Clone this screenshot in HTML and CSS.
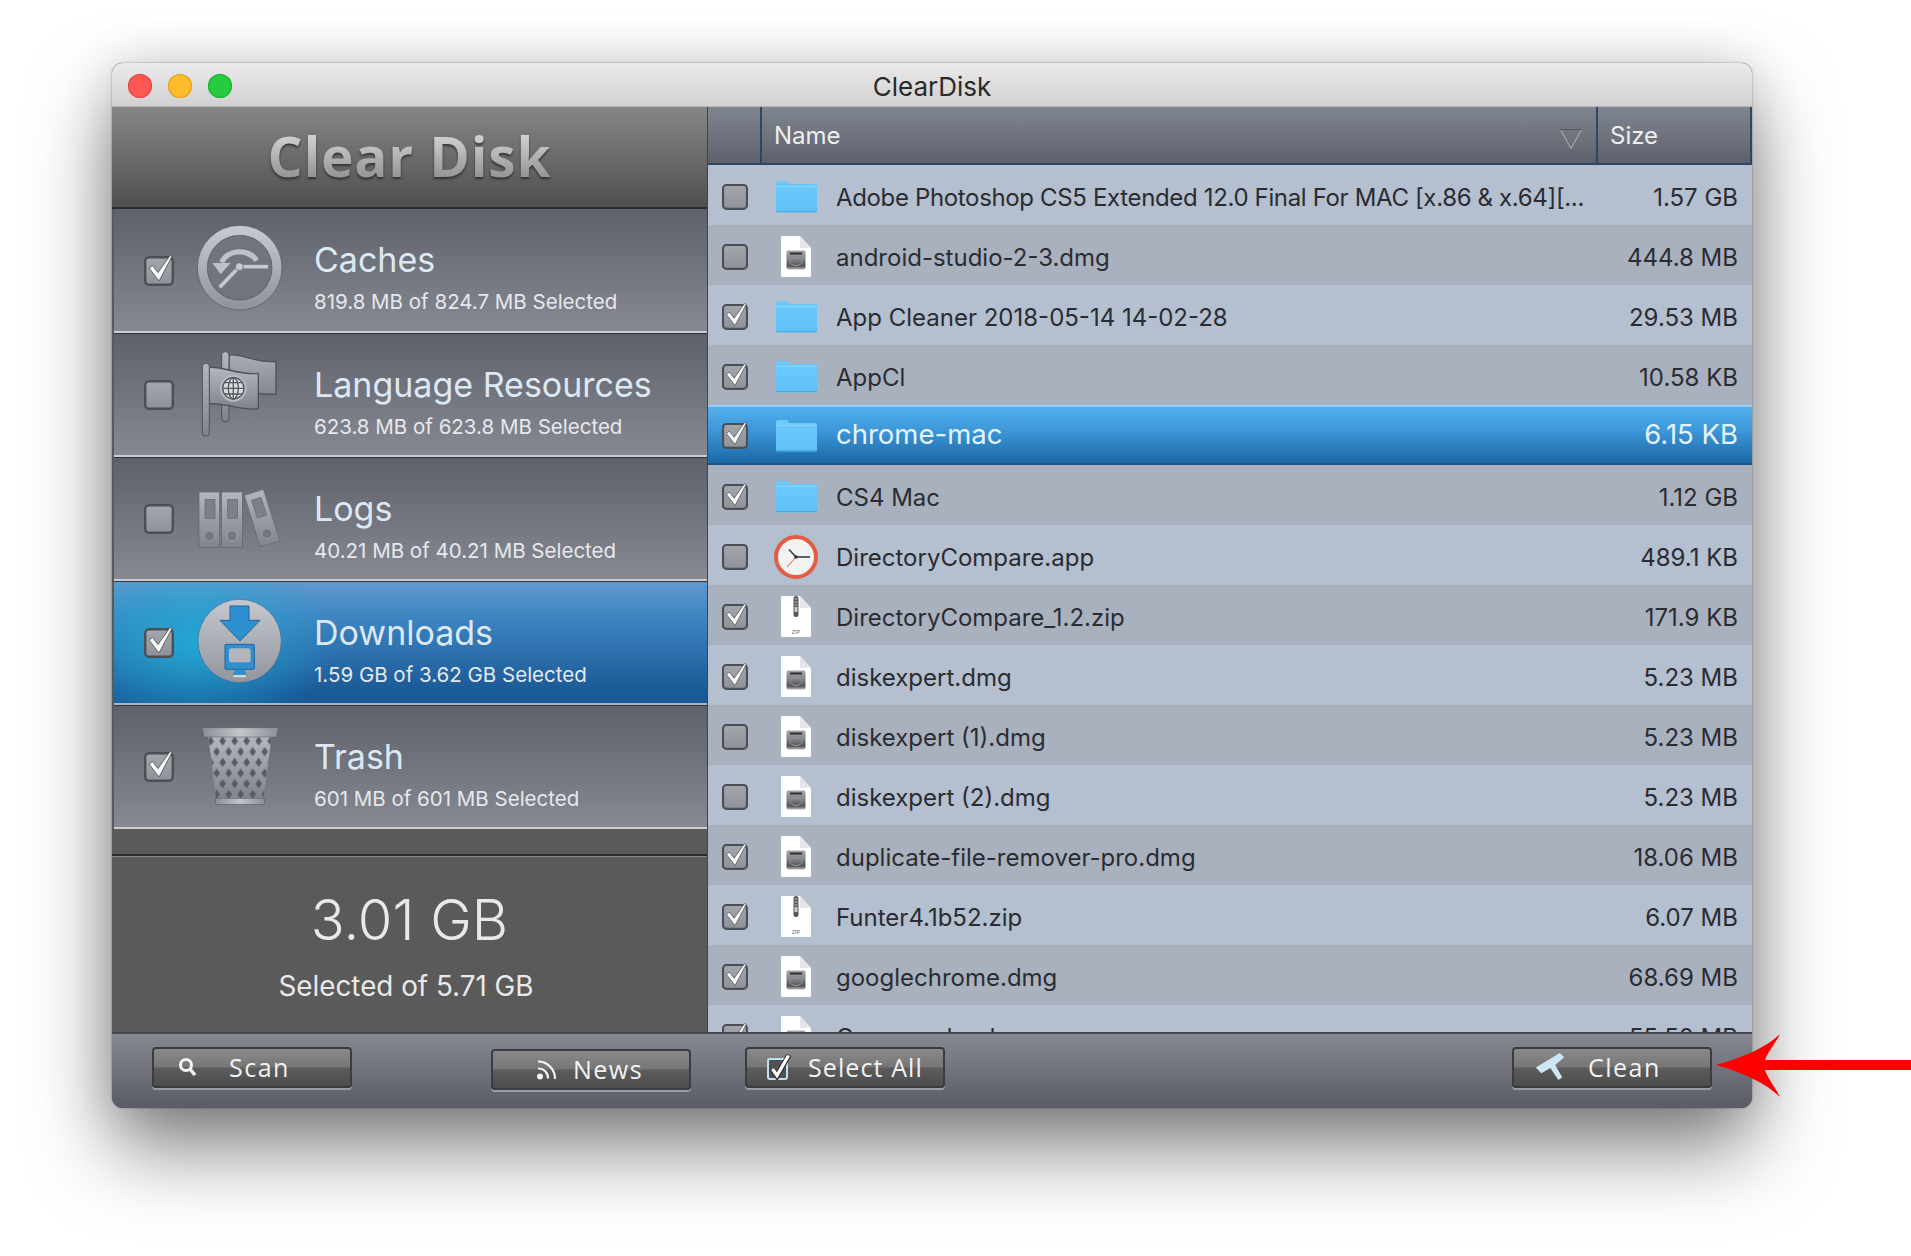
FILE: index.html
```html
<!DOCTYPE html>
<html lang="en">
<head>
<meta charset="utf-8">
<title>ClearDisk</title>
<link rel="stylesheet" href="styles.css">
</head>
<body>
<svg class="defs" aria-hidden="true">
  <defs>
    <linearGradient id="g-metal" x1="0" y1="0" x2="0" y2="1"><stop offset="0" stop-color="#b4b7be"/><stop offset="1" stop-color="#7f838c"/></linearGradient>
    <linearGradient id="g-flat" x1="0" y1="0" x2="0" y2="1"><stop offset="0" stop-color="#a9acb3"/><stop offset="1" stop-color="#83878f"/></linearGradient>
    <linearGradient id="g-disc" x1="0" y1="0" x2="0" y2="1"><stop offset="0" stop-color="#c6c8ce"/><stop offset="1" stop-color="#92959d"/></linearGradient>
    <linearGradient id="g-rim" x1="0" y1="0" x2="1" y2="0"><stop offset="0" stop-color="#8b8e95"/><stop offset=".5" stop-color="#c2c5ca"/><stop offset="1" stop-color="#8b8e95"/></linearGradient>
    <linearGradient id="g-box" x1="0" y1="0" x2="0" y2="1"><stop offset="0" stop-color="#a4a7ad"/><stop offset="1" stop-color="#8e9198"/></linearGradient>
    <linearGradient id="g-folder" x1="0" y1="0" x2="0" y2="1"><stop offset="0" stop-color="#6ccbfc"/><stop offset="1" stop-color="#5fc1f8"/></linearGradient>
    <linearGradient id="g-disk" x1="0" y1="0" x2="0" y2="1"><stop offset="0" stop-color="#a3a5a9"/><stop offset=".45" stop-color="#828488"/><stop offset=".82" stop-color="#515356"/><stop offset="1" stop-color="#b8b9bb"/></linearGradient>
    <pattern id="p-mesh" width="72" height="64" patternUnits="userSpaceOnUse" x="74" y="432">
      <path d="M18 4l10 14-10 14-10-14zM54 4l10 14-10 14-10-14zM0 36l10 14L0 64-10 50zM36 36l10 14-10 14-10-14zM72 36l10 14-10 14-10-14z" fill="#585b62"/>
    </pattern>

    <symbol id="cb-on" viewBox="0 0 30 31">
      <rect x="1.200" y="2.200" width="27.600" height="27.600" rx="4" fill="url(#g-box)" stroke="#4b4e55" stroke-width="2.400"/>
      <path d="M5 13L8.500 10.500 14 17.500 26 .5 28 1.500 15 26Z" fill="#f8f8f8" stroke="#55585e" stroke-width=".9"/>
    </symbol>
    <symbol id="cb-off" viewBox="0 0 30 31">
      <rect x="1.200" y="2.200" width="27.600" height="27.600" rx="4" fill="url(#g-box)" stroke="#4b4e55" stroke-width="2.400"/>
    </symbol>

    <symbol id="i-folder" viewBox="0 0 41 33">
      <path d="M0 3.500Q0 1 2 1h9l2.500 3H39q2 0 2 2v25q0 1.500-1.500 1.500h-38Q0 32.500 0 31z" fill="url(#g-folder)"/>
      <path d="M0 31.500h41" stroke="#4aa8e2" stroke-width="1"/>
      <path d="M0 6.500h41" stroke="#8ad6fd" stroke-width="1"/>
    </symbol>
    <symbol id="i-dmg" viewBox="0 0 30 41">
      <path d="M0 0h19l11 12v29H0z" fill="#fff"/>
      <path d="M19 0v12h11z" fill="#e5e6e8"/>
      <rect x="5.500" y="14.500" width="19" height="19" rx="2" fill="url(#g-disk)"/>
      <rect x="9" y="16.500" width="12" height="2" fill="#2f3033"/>
      <ellipse cx="15" cy="25.500" rx="6" ry="4" fill="none" stroke="#95979a" stroke-width="1"/>
    </symbol>
    <symbol id="i-zip" viewBox="0 0 30 41">
      <path d="M0 0h19l11 12v29H0z" fill="#fff"/>
      <path d="M19 0v12h11z" fill="#e5e6e8"/>
      <rect x="12.500" y="0" width="5" height="21" rx="2.500" fill="#55585e"/>
      <path d="M13.500 3h3M13.500 6h3M13.500 9h3" stroke="#bfc1c4" stroke-width="1"/>
      <rect x="13.500" y="11" width="3" height="5" fill="#c9cbce"/>
      <text x="15" y="38" font-family="Liberation Sans, sans-serif" font-size="5.500" fill="#6a6c70" text-anchor="middle">ZIP</text>
    </symbol>
    <symbol id="i-clock" viewBox="0 0 44 44">
      <circle cx="22" cy="22" r="20" fill="#f2f2f1" stroke="#e55c46" stroke-width="4"/>
      <path d="M22 22L15 14.500" stroke="#3c4350" stroke-width="1.800"/>
      <path d="M22 22h14" stroke="#4a5260" stroke-width="1.800"/>
      <path d="M22 22L13 32" stroke="#e55c46" stroke-width="1"/>
      <circle cx="22" cy="22" r="1.800" fill="#2c3340"/>
    </symbol>
  </defs>
</svg>

<main class="window">
  <header class="titlebar">
    <div class="lights"><i class="light light-red"></i><i class="light light-yellow"></i><i class="light light-green"></i></div>
    <span class="window-title">ClearDisk</span>
  </header>

  <div class="main">
    <aside class="sidebar">
      <div class="brand"><span class="brand-text">Clear Disk</span></div>

      <section class="cat">
        <svg class="cat-check"><use href="#cb-on"/></svg>
        <svg class="cat-icon" viewBox="0 -27 360 360">
          <circle cx="179" cy="146" r="113" fill="#71747c"/>
          <circle cx="179" cy="146" r="112" fill="none" stroke="url(#g-disc)" stroke-width="29"/>
          <circle cx="179" cy="146" r="127" fill="none" stroke="#55585f" stroke-width="2"/>
          <circle cx="179" cy="146" r="97" fill="none" stroke="#55585f" stroke-width="2"/>
          <path d="M125 130a56 44 0 0 1 105 -5" fill="none" stroke="#bec1c6" stroke-width="16"/>
          <path d="M97 132h55l-30 34z" fill="#bec1c6"/>
          <path d="M178 143h86" stroke="#c6c8cd" stroke-width="11"/>
          <path d="M178 143l-59 62" stroke="#c6c8cd" stroke-width="11"/>
          <circle cx="178" cy="143" r="12" fill="#c8cacf" stroke="#55585f" stroke-width="2"/>
        </svg>
        <div class="cat-text">
          <h2 class="cat-title">Caches</h2>
          <p class="cat-sub">819.8 MB of 824.7 MB Selected</p>
        </div>
      </section>

      <section class="cat">
        <svg class="cat-check"><use href="#cb-off"/></svg>
        <svg class="cat-icon" viewBox="0 -15 360 360">
          <path d="M147 45C190 40 230 72 288 64V162C240 170 200 146 147 152Z" fill="url(#g-flat)" stroke="#4e5158" stroke-width="4"/>
          <rect x="125" y="35" width="22" height="210" rx="10" fill="url(#g-metal)" stroke="#4e5158" stroke-width="3"/>
          <path d="M87 82C130 78 180 108 235 100V206C190 214 130 186 87 192Z" fill="url(#g-metal)" stroke="#4e5158" stroke-width="4"/>
          <rect x="67" y="70" width="21" height="218" rx="9" fill="url(#g-metal)" stroke="#4e5158" stroke-width="3"/>
          <circle cx="160" cy="145" r="40" fill="#b8bbc1"/>
          <circle cx="160" cy="145" r="32" fill="#dcdde0" stroke="#55585f" stroke-width="4"/>
          <path d="M128 145h64M133 128h54M133 162h54M160 113v64" stroke="#55585f" stroke-width="4" fill="none"/>
          <ellipse cx="160" cy="145" rx="15" ry="32" fill="none" stroke="#55585f" stroke-width="4"/>
        </svg>
        <div class="cat-text">
          <h2 class="cat-title">Language Resources</h2>
          <p class="cat-sub">623.8 MB of 623.8 MB Selected</p>
        </div>
      </section>

      <section class="cat">
        <svg class="cat-check"><use href="#cb-off"/></svg>
        <svg class="cat-icon" viewBox="0 354 360 360">
          <rect x="57" y="453" width="62" height="167" fill="url(#g-metal)" stroke="#61646b" stroke-width="2"/>
          <rect x="75" y="475" width="30" height="57" fill="#7d8088" stroke="#63666d" stroke-width="2"/>
          <circle cx="88" cy="585" r="15" fill="#74777f" stroke="#a9acb2" stroke-width="2"/>
          <rect x="125" y="453" width="62" height="167" fill="url(#g-metal)" stroke="#61646b" stroke-width="2"/>
          <rect x="143" y="475" width="30" height="57" fill="#7d8088" stroke="#63666d" stroke-width="2"/>
          <circle cx="156" cy="585" r="15" fill="#74777f" stroke="#a9acb2" stroke-width="2"/>
          <path d="M193 463L250 445 300 600 240 617Z" fill="url(#g-metal)" stroke="#61646b" stroke-width="2"/>
          <path d="M214 478L243 469 260 522 232 531Z" fill="#7d8088" stroke="#63666d" stroke-width="2"/>
          <circle cx="261" cy="578" r="15" fill="#74777f" stroke="#a9acb2" stroke-width="2"/>
        </svg>
        <div class="cat-text">
          <h2 class="cat-title">Logs</h2>
          <p class="cat-sub">40.21 MB of 40.21 MB Selected</p>
        </div>
      </section>

      <section class="cat cat-active">
        <svg class="cat-check"><use href="#cb-on"/></svg>
        <svg class="cat-icon" viewBox="0 -24 360 360">
          <circle cx="179" cy="150" r="125" fill="url(#g-disc)" stroke="#2f6ba3" stroke-width="2"/>
          <path d="M150 45h57v43h33l-60 62-60-62h30z" fill="#2f90cf" stroke="#1e659e" stroke-width="3"/>
          <rect x="135" y="160" width="88" height="75" rx="3" fill="#2f90cf" stroke="#1e659e" stroke-width="3"/>
          <rect x="147" y="172" width="65" height="42" rx="8" fill="#b3b6bc"/>
          <path d="M165 237h28l7 14h-42z" fill="#2f90cf"/>
          <rect x="160" y="252" width="38" height="7" rx="2" fill="#d5d7da"/>
        </svg>
        <div class="cat-text">
          <h2 class="cat-title">Downloads</h2>
          <p class="cat-sub">1.59 GB of 3.62 GB Selected</p>
        </div>
      </section>

      <section class="cat">
        <svg class="cat-check"><use href="#cb-on"/></svg>
        <svg class="cat-icon" viewBox="0 348 360 360">
          <path d="M85 436H275L250 624H108Z" fill="url(#g-metal)"/>
          <path d="M85 436H275L250 624H108Z" fill="url(#p-mesh)"/>
          <path d="M66 410H295L290 438H72Z" fill="url(#g-rim)" stroke="#55585f" stroke-width="1.500"/>
          <rect x="107" y="622" width="146" height="18" fill="url(#g-rim)" stroke="#55585f" stroke-width="1.500"/>
        </svg>
        <div class="cat-text">
          <h2 class="cat-title">Trash</h2>
          <p class="cat-sub">601 MB of 601 MB Selected</p>
        </div>
      </section>

      <div class="spacer"></div>

      <div class="stats">
        <div class="stats-size">3.01 GB</div>
        <div class="stats-note">Selected of 5.71 GB</div>
      </div>
    </aside>

    <section class="files">
      <div class="thead">
        <div class="th th-check"></div>
        <div class="th th-name">Name
          <svg class="sort" viewBox="0 0 22 20"><path d="M.5.5h21L11 19.500z" fill="none" stroke="#b4b7bd"/><path d="M0 .5h22" stroke="#55585f"/></svg>
        </div>
        <div class="th th-size">Size</div>
      </div>
      <div class="tbody">
        <div class="row"><svg class="check"><use href="#cb-off"/></svg><span class="ficon"><svg class="ic-folder"><use href="#i-folder"/></svg></span><span class="fname fname-tight">Adobe Photoshop CS5 Extended 12.0 Final For MAC [x.86 &amp; x.64][...</span><span class="fsize">1.57 GB</span></div>
        <div class="row"><svg class="check"><use href="#cb-off"/></svg><span class="ficon"><svg class="ic-file"><use href="#i-dmg"/></svg></span><span class="fname">android-studio-2-3.dmg</span><span class="fsize">444.8 MB</span></div>
        <div class="row"><svg class="check"><use href="#cb-on"/></svg><span class="ficon"><svg class="ic-folder"><use href="#i-folder"/></svg></span><span class="fname">App Cleaner 2018-05-14 14-02-28</span><span class="fsize">29.53 MB</span></div>
        <div class="row"><svg class="check"><use href="#cb-on"/></svg><span class="ficon"><svg class="ic-folder"><use href="#i-folder"/></svg></span><span class="fname">AppCl</span><span class="fsize">10.58 KB</span></div>
        <div class="row row-selected"><svg class="check"><use href="#cb-on"/></svg><span class="ficon"><svg class="ic-folder"><use href="#i-folder"/></svg></span><span class="fname">chrome-mac</span><span class="fsize">6.15 KB</span></div>
        <div class="row"><svg class="check"><use href="#cb-on"/></svg><span class="ficon"><svg class="ic-folder"><use href="#i-folder"/></svg></span><span class="fname">CS4 Mac</span><span class="fsize">1.12 GB</span></div>
        <div class="row"><svg class="check"><use href="#cb-off"/></svg><span class="ficon"><svg class="ic-clock"><use href="#i-clock"/></svg></span><span class="fname">DirectoryCompare.app</span><span class="fsize">489.1 KB</span></div>
        <div class="row"><svg class="check"><use href="#cb-on"/></svg><span class="ficon"><svg class="ic-file"><use href="#i-zip"/></svg></span><span class="fname">DirectoryCompare_1.2.zip</span><span class="fsize">171.9 KB</span></div>
        <div class="row"><svg class="check"><use href="#cb-on"/></svg><span class="ficon"><svg class="ic-file"><use href="#i-dmg"/></svg></span><span class="fname">diskexpert.dmg</span><span class="fsize">5.23 MB</span></div>
        <div class="row"><svg class="check"><use href="#cb-off"/></svg><span class="ficon"><svg class="ic-file"><use href="#i-dmg"/></svg></span><span class="fname">diskexpert (1).dmg</span><span class="fsize">5.23 MB</span></div>
        <div class="row"><svg class="check"><use href="#cb-off"/></svg><span class="ficon"><svg class="ic-file"><use href="#i-dmg"/></svg></span><span class="fname">diskexpert (2).dmg</span><span class="fsize">5.23 MB</span></div>
        <div class="row"><svg class="check"><use href="#cb-on"/></svg><span class="ficon"><svg class="ic-file"><use href="#i-dmg"/></svg></span><span class="fname">duplicate-file-remover-pro.dmg</span><span class="fsize">18.06 MB</span></div>
        <div class="row"><svg class="check"><use href="#cb-on"/></svg><span class="ficon"><svg class="ic-file"><use href="#i-zip"/></svg></span><span class="fname">Funter4.1b52.zip</span><span class="fsize">6.07 MB</span></div>
        <div class="row"><svg class="check"><use href="#cb-on"/></svg><span class="ficon"><svg class="ic-file"><use href="#i-dmg"/></svg></span><span class="fname">googlechrome.dmg</span><span class="fsize">68.69 MB</span></div>
        <div class="row"><svg class="check"><use href="#cb-on"/></svg><span class="ficon"><svg class="ic-file"><use href="#i-dmg"/></svg></span><span class="fname">Commander.dmg</span><span class="fsize">55.50 MB</span></div>
      </div>
    </section>
  </div>

  <footer class="toolbar">
    <button class="btn btn-scan" type="button">
      <svg class="btn-ic ic-scan" viewBox="0 0 19 19"><circle cx="8" cy="8" r="5.500" fill="none" stroke="#f4f4f4" stroke-width="3"/><path d="M12 12l5 6" stroke="#f4f4f4" stroke-width="3.500"/></svg>
      <span>Scan</span>
    </button>
    <button class="btn btn-news" type="button">
      <svg class="btn-ic ic-news" viewBox="0 0 23 22"><circle cx="4" cy="18.500" r="3" fill="#f4f4f4"/><path d="M2 10.500a9.500 9.500 0 0 1 10 10M2 3.500a17 17 0 0 1 17 17.500" fill="none" stroke="#f4f4f4" stroke-width="2.200"/></svg>
      <span>News</span>
    </button>
    <button class="btn btn-select" type="button">
      <svg class="btn-ic ic-select" viewBox="0 0 26 26"><rect x="1" y="5" width="19" height="20" rx="2" fill="#4f5155" stroke="#bfe0ef" stroke-width="2"/><path d="M5 15l5 7L22 1" fill="none" stroke="#33353a" stroke-width="5.500"/><path d="M5.500 15l4.500 6.500L21.500 1.500" fill="none" stroke="#fff" stroke-width="3.200"/></svg>
      <span>Select All</span>
    </button>
    <button class="btn btn-clean" type="button">
      <svg class="btn-ic ic-clean" viewBox="256 222 92 90"><path d="M258 270L332 225 346 238 318 262 340 300 328 309 303 272 275 288Z" fill="#cde6f3"/></svg>
      <span>Clean</span>
    </button>
  </footer>
</main>

<svg class="annot-arrow" viewBox="0 0 195 64" aria-hidden="true">
  <path d="M0 31C25 24 50 14 64 0 59 10 51 19 49 26H195V36H49C51 43 59 53 64 63 50 49 25 38 0 31Z" fill="#fe0000"/>
</svg>
</body>
</html>
```

FILE: styles.css
```css
* { box-sizing: border-box; }

html, body {
  margin: 0;
  height: 100%;
  background: #fff;
  overflow: hidden;
}

body {
  position: relative;
  padding: 63px 0 0 112px;
  font-family: Inter, "Liberation Sans", sans-serif;
}

.defs { position: absolute; width: 0; height: 0; }

.window {
  width: 1640px;
  height: 1045px;
  display: grid;
  grid-template-rows: 44px 1fr 76px;
  border-radius: 11px;
  background: #5a5a5a;
  box-shadow: 0 40px 80px rgba(0, 0, 0, .5), 0 0 2px rgba(0, 0, 0, .45), 0 0 50px rgba(0, 0, 0, .12);
  overflow: hidden;
}

/* title bar */
.titlebar {
  position: relative;
  display: flex;
  align-items: center;
  justify-content: center;
  padding-top: 3px;
  background: linear-gradient(#ebe9ea, #d1d1d1);
  border-bottom: 1px solid #b5b5b5;
}

.lights {
  position: absolute;
  left: 16px;
  top: 11px;
  display: flex;
  gap: 16px;
}

.light { width: 24px; height: 24px; border-radius: 50%; display: block; }
.light-red { background: #fc5753; box-shadow: inset 0 0 0 1px #de4540; }
.light-yellow { background: #fdbc2c; box-shadow: inset 0 0 0 1px #de9f21; }
.light-green { background: #27cb3f; box-shadow: inset 0 0 0 1px #1fae2f; }

.window-title { font-size: 26px; color: #2a2a2a; }

.main {
  display: grid;
  grid-template-columns: 595px 1fr;
  min-height: 0;
}

/* sidebar */
.sidebar {
  display: flex;
  flex-direction: column;
  min-height: 0;
  background: #5a5a5a;
}

.brand {
  height: 102px;
  display: flex;
  align-items: center;
  justify-content: center;
  padding-bottom: 4px;
  background: linear-gradient(#868686, #4f4f4f);
  border-bottom: 2px solid #2b2c30;
}

.brand-text {
  font-family: "Open Sans", "Noto Sans", sans-serif;
  font-size: 55px;
  font-weight: 700;
  letter-spacing: .8px;
  line-height: 1;
  color: transparent;
  background: linear-gradient(#dcdcdc, #8c8c8c);
  -webkit-background-clip: text;
  background-clip: text;
  filter: drop-shadow(0 2px 1px rgba(30, 30, 30, .7));
}

.cat {
  height: 124px;
  margin-left: 2px;
  display: flex;
  align-items: center;
  padding-left: 30px;
  background: linear-gradient(#5e6169, #868991);
  border-bottom: 2px solid #cbcdd2;
  box-shadow: 0 1px 0 #2c2d31;
}

.cat + .cat { border-top: 1px solid #34363b; }

.cat-active {
  background:
    radial-gradient(ellipse 140px 90px at 80px 50%, rgba(32, 172, 214, .9), rgba(32, 172, 214, 0)),
    linear-gradient(#6099ce, #3f86c2 28%, #1a5a97 90%);
  border-bottom-color: #a4b6c8;
}

.cat-check { width: 30px; height: 31px; flex: none; }

.cat-icon {
  width: 120px;
  height: 120px;
  flex: none;
  margin: 0 14px 0 6px;
}

.cat-text { padding-top: 16px; min-width: 0; }

.cat-title {
  margin: 0 0 8px;
  font-size: 34px;
  font-weight: 400;
  line-height: 40px;
  color: #dce8f4;
}

.cat-sub {
  margin: 0;
  font-size: 20.500px;
  line-height: 28px;
  color: #e6e8ec;
}

.spacer { height: 25px; background: #5a5a5a; }

.stats {
  flex: 1;
  border-top: 2px solid #2c2c2c;
  box-shadow: inset 0 1px 0 #868686;
  background: #5a5a5a;
  text-align: center;
  color: #e9e9e9;
}

.stats-size {
  margin-top: 33px;
  font-size: 56px;
  font-weight: 350;
  line-height: 62px;
}

.stats-note {
  margin-top: 18px;
  padding-right: 7px;
  font-size: 27.800px;
  line-height: 34px;
}

/* file list */
.files {
  display: flex;
  flex-direction: column;
  min-height: 0;
  overflow: hidden;
  background: #b4bfcf;
  border-left: 1px solid #2f4766;
}

.thead {
  flex: none;
  height: 58px;
  display: flex;
  background: linear-gradient(#808690, #5d616b);
  border-bottom: 2px solid #2f4766;
  border-right: 2px solid #2f4766;
  color: #eeeeee;
  font-size: 24px;
}

.th { display: flex; align-items: center; }
.th-check { width: 54px; border-right: 2px solid #2f4766; }
.th-name { flex: 1; padding-left: 12px; position: relative; }
.th-size { width: 154px; padding-left: 12px; border-left: 2px solid #2f4766; }

.sort {
  position: absolute;
  right: 14px;
  top: 22px;
  width: 22px;
  height: 20px;
}

.tbody { flex: 1; min-height: 0; overflow: hidden; }

.row {
  height: 60px;
  display: flex;
  align-items: center;
  padding: 3px 14px 0 14px;
  font-size: 24px;
  color: #2b2c31;
  background: #b4bfcf;
}

.row:nth-child(even) { background: #a9b1bf; }

.row-selected,
.row-selected:nth-child(odd) {
  padding-top: 0;
  background: linear-gradient(#52afec, #3e98d9 40%, #1b68a7);
  border-top: 2px solid #8ed2f6;
  border-bottom: 2px solid #1f5488;
  color: #e4f3ff;
  font-size: 27.500px;
}

.check { width: 26px; height: 27px; flex: none; }

.ficon {
  width: 50px;
  height: 44px;
  flex: none;
  margin: 0 15px 0 23px;
  display: flex;
  align-items: center;
  justify-content: center;
}

.ic-folder { width: 41px; height: 33px; }
.ic-file { width: 30px; height: 41px; }
.ic-clock { width: 44px; height: 44px; }

.fname { flex: 1; min-width: 0; padding-top: 1px; white-space: nowrap; overflow: hidden; }
.fname-tight { letter-spacing: -.35px; }
.fsize { flex: none; padding-top: 1px; white-space: nowrap; }

.row-selected .fname,
.row-selected .fsize { padding: 0 0 3px; }

/* toolbar */
.toolbar {
  display: flex;
  align-items: flex-start;
  padding: 13px 40px 0 40px;
  background: linear-gradient(#868991, #595c65);
  border-top: 2px solid #45474c;
}

.btn {
  width: 200px;
  height: 41px;
  flex: none;
  display: flex;
  align-items: center;
  padding: 0 0 2px;
  border: 2px solid #3a3c41;
  border-radius: 4px;
  background: linear-gradient(#8a8a8a, #767676 48%, #5c5c5c 52%, #4d4d4d);
  box-shadow: 0 2px 0 #9a9da3;
  font-family: "Open Sans", "Noto Sans", sans-serif;
  font-size: 25px;
  letter-spacing: 1.500px;
  color: #f2f2f2;
}

.btn-ic { flex: none; }

.btn-news { margin: 2px 0 0 139px; padding-left: 43px; gap: 14px; }
.btn-scan { padding-left: 24px; gap: 32px; }
.btn-select { margin-left: 54px; padding-left: 20px; gap: 15px; letter-spacing: 1.100px; }
.btn-clean { margin-left: auto; padding-left: 21px; gap: 23px; }

.ic-scan { width: 19px; height: 19px; }
.ic-news { width: 23px; height: 22px; }
.ic-select { width: 26px; height: 26px; }
.ic-clean { width: 30px; height: 29px; }

/* red annotation arrow laid over the screenshot */
.annot-arrow {
  position: absolute;
  left: 1716px;
  top: 1034px;
  width: 195px;
  height: 64px;
}
```
